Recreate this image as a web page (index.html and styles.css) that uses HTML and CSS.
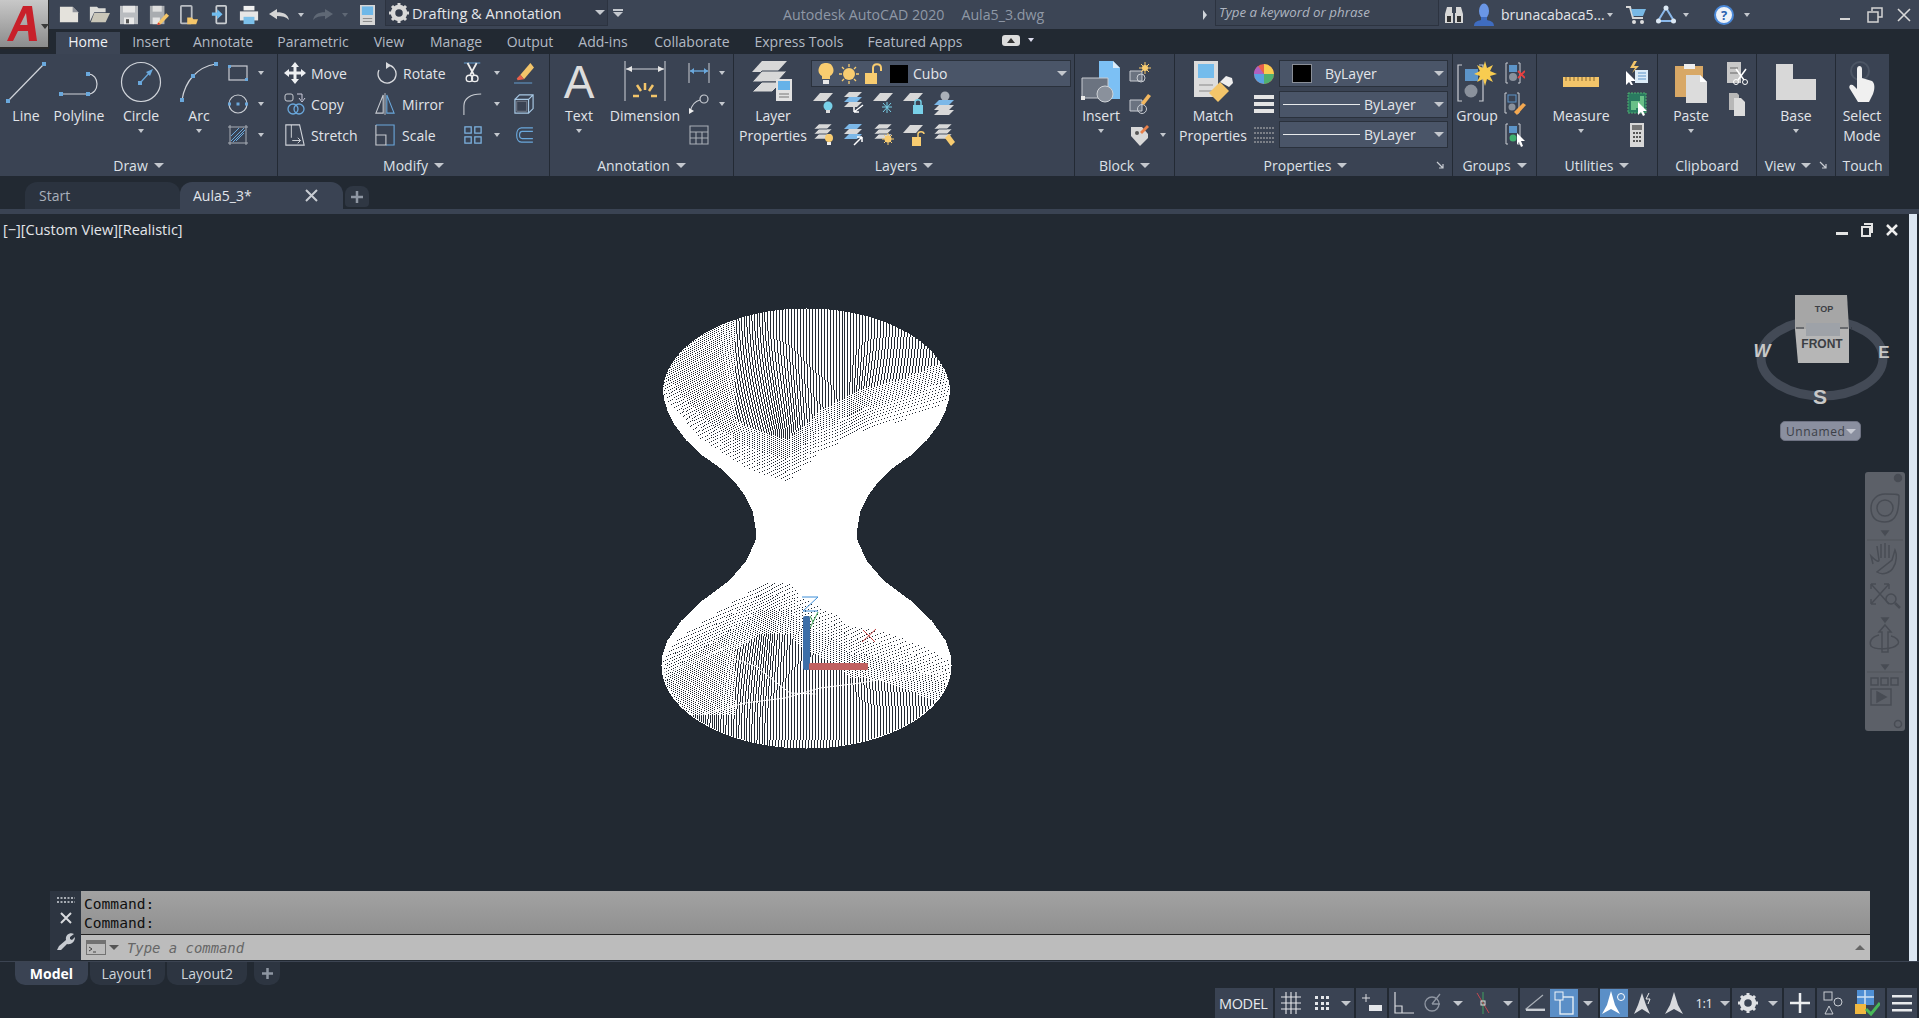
FILE: index.html
```html
<!DOCTYPE html>
<html lang="en">
<head>
<meta charset="utf-8">
<title>Autodesk AutoCAD 2020 Aula5_3.dwg</title>
<link rel="stylesheet" href="styles.css">
</head>
<body>
<div class="logo"><svg width="36" height="40" viewBox="0 0 36 40"><path d="M3 37 L19 2 H28 L33 37 H25 L24 27 H14 L9 37Z M16 21 H23.5 L22 9Z" fill="#c8202a" fill-rule="evenodd"/></svg><i class="car dark"></i></div>

<header class="titlebar">
  <span class="qa"><svg width="20" height="17" viewBox="0 0 22 22" preserveAspectRatio="none"><path d="M1 1H15L21 8V21H1Z" fill="#e4e2dc"/><path d="M15 1V8H21Z" fill="#8f939a"/></svg></span>
  <span class="qa"><svg width="21" height="17" viewBox="0 0 24 22" preserveAspectRatio="none"><path d="M1 1H9L11 3H19V8H6L1 20Z" fill="#dcdcd8"/><path d="M6 9H24L19 21H2Z" fill="#c9c6b8"/></svg></span>
  <span class="qa"><svg width="20" height="20" viewBox="0 0 20 24" preserveAspectRatio="none"><path d="M1 1H19V23H1Z" fill="#b9bcc0"/><path d="M4 1H16V9H4Z" fill="#e6e6e6"/><path d="M5 15H15V23H5Z" fill="#e9e9e9"/><path d="M7 17H10V22H7Z" fill="#555"/></svg></span>
  <span class="qa"><svg width="20" height="20" viewBox="0 0 22 24" preserveAspectRatio="none"><path d="M1 1H17V23H1Z" fill="#a9acb0"/><path d="M4 1H14V8H4Z" fill="#dedede"/><path d="M4 15H12V23H4Z" fill="#e3e3e3"/><path d="M10 21 L19 10 L22 13 L13 23 L9 24Z" fill="#f3c56a"/><path d="M9 24 L10 21 L13 23Z" fill="#d33"/></svg></span>
  <span class="qa"><svg width="18" height="20" viewBox="0 0 20 24" preserveAspectRatio="none"><rect x="1" y="1" width="12" height="21" rx="1" fill="none" stroke="#b8bcc2" stroke-width="2"/><path d="M8 15H13L15 17H20L18 23H8Z" fill="#f3c56a"/></svg></span>
  <span class="qa"><svg width="16" height="20" viewBox="0 0 18 24" preserveAspectRatio="none"><rect x="6" y="1" width="11" height="21" rx="1" fill="none" stroke="#c8ccd0" stroke-width="2"/><path d="M1 9H7V5L13 11L7 17V13H1Z" fill="#6fbdf0"/></svg></span>
  <span class="qa"><svg width="20" height="20" viewBox="0 0 22 22" preserveAspectRatio="none"><path d="M5 1H17V6H5Z" fill="#f0f0f0"/><path d="M1 7H21V17H1Z" fill="#e6e6e6"/><path d="M5 13H17V21H5Z" fill="#7cc0ea"/></svg></span>
  <span class="qa"><svg width="20" height="11" viewBox="0 0 20 14" preserveAspectRatio="none"><path d="M8 0V4C15 4 19 7 20 14C17 10 13 9 8 9V13L0 6.500Z" fill="#d4d4d4"/></svg></span>
  <span class="qs"><i class="car"></i></span>
  <span class="qa"><svg width="20" height="11" viewBox="0 0 20 14" preserveAspectRatio="none"><path d="M12 0V4C5 4 1 7 0 14C3 10 7 9 12 9V13L20 6.500Z" fill="#5f6875"/></svg></span>
  <span class="qs"><i class="car faint"></i></span>
  <span class="qa"><svg width="15" height="20" viewBox="0 0 16 28" preserveAspectRatio="none"><path d="M0 0H16V28H0Z" fill="#d7d7d7"/><path d="M2 2H14V14H2Z" fill="#6fb8e8"/><path d="M3 19H13M3 23H13" stroke="#777"/></svg></span>
  <div class="workspace"><svg class="gear" width="20" height="20" viewBox="0 0 20 20"><circle cx="10" cy="10" r="6" fill="none" stroke="#d8d8d8" stroke-width="4.500"/><path d="M10 0V4M10 16V20M0 10H4M16 10H20M3 3L6 6M14 14L17 17M17 3L14 6M3 17L6 14" stroke="#d8d8d8" stroke-width="3"/></svg><span class="wtext">Drafting &amp; Annotation</span><i class="car big"></i></div>
  <span class="wmenu"></span>
  <div class="apptitle"><span>Autodesk AutoCAD 2020</span><span>Aula5_3.dwg</span></div>
  <div class="titleright">
    <span class="play"></span>
    <div class="search">Type a keyword or phrase</div>
    <span class="tb binoc"><svg width="20" height="20" viewBox="0 0 20 20"><path d="M3 2H8V8H9V18H1V9Z M12 2H17L19 9V18H11V8H12Z" fill="#d7d7d7"/><path d="M3 11H7V17H3ZM13 11H17V17H13Z" fill="#333"/></svg></span>
    <span class="tb usr"><svg width="22" height="24" viewBox="0 0 22 24"><ellipse cx="11" cy="8" rx="5" ry="7.500" fill="#6a96e6"/><path d="M8 14H14V17C18 18 21 19 21 23H1C1 19 4 18 8 17Z" fill="#3f6cc0"/></svg></span>
    <span class="uname">brunacabaca5...</span>
    <span class="qs narrow"><i class="car"></i></span>
    <span class="tb cart"><svg width="22" height="20" viewBox="0 0 22 20"><path d="M1 2H5L8 13H18" fill="none" stroke="#d8d8d8" stroke-width="2"/><path d="M6 4H21L18 11H8Z" fill="#78b8e4"/><circle cx="9" cy="17" r="2" fill="#ddd"/><circle cx="17" cy="17" r="2" fill="#ddd"/></svg></span>
    <span class="tb a360"><svg width="20" height="20" viewBox="0 0 20 20"><path d="M10 3L2 16H18Z" fill="none" stroke="#8ab8ea" stroke-width="2"/><circle cx="10" cy="3" r="2.500" fill="#dce8f4"/><circle cx="2.500" cy="16" r="2.500" fill="#dce8f4"/><circle cx="17.500" cy="16" r="2.500" fill="#dce8f4"/></svg></span>
    <span class="qs"><i class="car"></i></span>
    <span class="tb helpb"><span class="helpi">?</span></span>
    <span class="qs"><i class="car"></i></span>
    <span class="win first"><svg width="12" height="12" viewBox="0 0 12 12"><path d="M1 9H11V11H1Z" fill="#d4d4d4"/></svg></span>
    <span class="win"><svg width="16" height="16" viewBox="0 0 16 16"><path d="M5 4V1H15V10H11M1 5H11V15H1Z" fill="none" stroke="#d4d4d4" stroke-width="1.500"/></svg></span>
    <span class="win last"><svg width="14" height="14" viewBox="0 0 14 14"><path d="M1 1L13 13M13 1L1 13" stroke="#d8d8d8" stroke-width="1.600"/></svg></span>
  </div>
</header>

<nav class="ribbontabs">
  <span class="rt active w64">Home</span><span class="rt w62">Insert</span><span class="rt w82">Annotate</span><span class="rt w98">Parametric</span><span class="rt w54">View</span><span class="rt w80">Manage</span><span class="rt w68">Output</span><span class="rt w78">Add-ins</span><span class="rt w100">Collaborate</span><span class="rt w114">Express Tools</span><span class="rt w118">Featured Apps</span>
  <span class="rtoggle"><svg width="18" height="11" viewBox="0 0 18 11"><rect width="18" height="11" rx="3" fill="#dcdcdc"/><path d="M5 8L9 3L13 8Z" fill="#333"/></svg></span><i class="car small"></i>
</nav>

<section class="ribbon">
  <div class="panel p278">
    <div class="pbody">
      <div class="lg w52"><div class="ic"><svg width="44" height="44" viewBox="0 0 44 44"><path d="M4 41L40 4" stroke="#d0d4da" stroke-width="1.200"/><rect x="2" y="39" width="4" height="4" fill="#6aa8dc"/><rect x="38" y="2" width="4" height="4" fill="#6aa8dc"/></svg></div><div class="lb">Line</div></div>
      <div class="lg w54"><div class="ic"><svg width="44" height="44" viewBox="0 0 44 44"><path d="M4 34H31C43 34 43 14 31 14" fill="none" stroke="#d0d4da" stroke-width="1.200"/><rect x="2" y="32" width="4" height="4" fill="#6aa8dc"/><rect x="29" y="32" width="4" height="4" fill="#6aa8dc"/><rect x="29" y="12" width="4" height="4" fill="#6aa8dc"/></svg></div><div class="lb">Polyline</div></div>
      <div class="lg w70"><div class="ic"><svg width="42" height="42" viewBox="0 0 42 42"><circle cx="21" cy="21" r="19.500" fill="none" stroke="#d0d4da" stroke-width="1.200"/><path d="M20 22L31 10" stroke="#6aa8dc" stroke-width="1.200"/><path d="M33 8L26 11L30 15Z" fill="#6aa8dc"/><rect x="18" y="20" width="4" height="4" fill="#6aa8dc"/></svg></div><div class="lb">Circle</div><i class="car"></i></div>
      <div class="lg w46"><div class="ic"><svg width="42" height="42" viewBox="0 0 42 42"><path d="M4 39C7 20 19 6 38 3" fill="none" stroke="#d0d4da" stroke-width="1.200"/><rect x="2" y="37" width="4" height="4" fill="#6aa8dc"/><rect x="13" y="13" width="4" height="4" fill="#6aa8dc"/><rect x="36" y="1" width="4" height="4" fill="#6aa8dc"/></svg></div><div class="lb">Arc</div><i class="car"></i></div>
      <div class="st">
        <div class="rw"><span class="cell w32"><svg width="22" height="18" viewBox="0 0 22 18"><rect x="2" y="2" width="18" height="14" fill="none" stroke="#c8ccd2" stroke-width="1.200"/><rect x="1" y="1" width="3" height="3" fill="#6aa8dc"/><rect x="18" y="14" width="3" height="3" fill="#6aa8dc"/></svg></span><span class="cell w14"><i class="car"></i></span></div>
        <div class="rw"><span class="cell w32"><svg width="22" height="20" viewBox="0 0 22 20"><circle cx="11" cy="10" r="9" fill="none" stroke="#c8ccd2" stroke-width="1.200"/><rect x="1" y="8.500" width="3" height="3" fill="#6aa8dc"/><rect x="9.500" y="8.500" width="3" height="3" fill="#6aa8dc"/><rect x="18" y="8.500" width="3" height="3" fill="#6aa8dc"/></svg></span><span class="cell w14"><i class="car"></i></span></div>
        <div class="rw"><span class="cell w32"><svg width="20" height="20" viewBox="0 0 20 20"><path d="M2 0V20M18 0V20M0 2H20M0 18H20" stroke="#a8aeb6"/><path d="M3 16L16 3M3 11L11 3M8 16L16 8M5 17L17 5" stroke="#6aa8dc"/></svg></span><span class="cell w14"><i class="car"></i></span></div>
      </div>
    </div>
    <div class="pfoot"><span class="ft">Draw</span><i class="car big"></i></div>
  </div>

  <div class="panel p272">
    <div class="st">
      <div class="rw">
        <span class="mi w97"><svg width="22" height="22" viewBox="0 0 22 22"><path d="M11 0L15 5H12.500V9.500H17V7L22 11L17 15V12.500H12.500V17H15L11 22L7 17H9.500V12.500H5V15L0 11L5 7V9.500H9.500V5H7Z" fill="#eef0f2"/></svg><span class="ml">Move</span></span>
        <span class="mi w87"><svg width="22" height="22" viewBox="0 0 22 22"><path d="M12 3A9 9 0 1 1 4 8" fill="none" stroke="#d8dade" stroke-width="1.300"/><path d="M11 0L16 3.500L11 7Z" fill="#d8dade"/></svg><span class="ml s1">Rotate</span></span>
        <span class="cell w22"><svg width="20" height="24" viewBox="0 0 22 24"><path d="M1 1H19" stroke="#6aa8dc"/><path d="M5 1L12 14M15 1L8 14" stroke="#eee" stroke-width="2"/><circle cx="7" cy="18" r="3.500" fill="none" stroke="#eee" stroke-width="1.500"/><circle cx="13" cy="18" r="3.500" fill="none" stroke="#eee" stroke-width="1.500"/></svg></span><span class="cell w14 gapl"><i class="car"></i></span>
        <span class="cell w22 gapr"><svg width="20" height="24" viewBox="0 0 22 24"><path d="M7 14L18 1L22 6L11 19Z" fill="#f3c56a"/><path d="M3 18L7 14L11 19L4 20Z" fill="#e8604a"/><path d="M0 23H20" stroke="#6aa8dc"/></svg></span>
      </div>
      <div class="rw">
        <span class="mi w97"><svg width="22" height="22" viewBox="0 0 22 22"><rect x="1" y="1" width="8" height="7" rx="2" fill="none" stroke="#c8ccd2"/><path d="M13 1H18V7M15 5L18 9L21 5" fill="none" stroke="#ccd"/><circle cx="9" cy="16" r="5" fill="none" stroke="#6aa8dc" stroke-width="1.300"/><circle cx="15" cy="16" r="5" fill="none" stroke="#6aa8dc" stroke-width="1.300"/></svg><span class="ml">Copy</span></span>
        <span class="mi w87"><svg width="20" height="22" viewBox="0 0 22 24"><path d="M9 2L1 22H9Z" fill="none" stroke="#c8ccd2" stroke-width="1.200"/><path d="M13 2L21 22H13Z" fill="none" stroke="#6aa8dc" stroke-width="1.200"/><path d="M11 0V24" stroke="#c8ccd2"/></svg><span class="ml s0">Mirror</span></span>
        <span class="cell w22"><svg width="20" height="24" viewBox="0 0 22 24"><path d="M1 24V14C1 6 8 1 20 1" fill="none" stroke="#c8ccd2" stroke-width="1.200"/></svg></span><span class="cell w14 gapl"><i class="car"></i></span>
        <span class="cell w22 gapr"><svg width="20" height="20" viewBox="0 0 22 22"><path d="M1 6H16V21H1ZM1 6L6 1H21V16L16 21M16 6L21 1" fill="none" stroke="#a7c8e4" stroke-width="1.300"/><path d="M3 8H14V19H3Z" fill="none" stroke="#777f8c"/></svg></span>
      </div>
      <div class="rw">
        <span class="mi w97"><svg width="22" height="22" viewBox="0 0 22 24"><path d="M1 1H16L21 23H1Z" fill="none" stroke="#d0d4da" stroke-width="1.200"/><path d="M7 1V15M8 18H17M14 15L17 18L14 21" fill="none" stroke="#d8dade"/></svg><span class="ml">Stretch</span></span>
        <span class="mi w87"><svg width="20" height="22" viewBox="0 0 22 24"><path d="M1 1H21V23H12" fill="none" stroke="#6aa8dc" stroke-width="1.200"/><path d="M1 1V12M1 12H12V23H1Z" fill="none" stroke="#c8ccd2" stroke-width="1.200"/></svg><span class="ml s0">Scale</span></span>
        <span class="cell w22"><svg width="18" height="20" viewBox="0 0 20 20"><path d="M1 1H8V8H1ZM12 1H19V8H12ZM1 12H8V19H1ZM12 12H19V19H12Z" fill="none" stroke="#7eb4e2" stroke-width="1.400"/></svg></span><span class="cell w14 gapl"><i class="car"></i></span>
        <span class="cell w22 gapr"><svg width="20" height="16" viewBox="0 0 22 18"><path d="M21 1H8C1 1 1 17 8 17H21M21 5H9C5 5 5 13 9 13H21" fill="none" stroke="#6aa8dc" stroke-width="1.300"/></svg></span>
      </div>
    </div>
    <div class="pfoot fabs"><span class="ft">Modify</span><i class="car big"></i></div>
  </div>

  <div class="panel p184">
    <div class="pbody">
      <div class="lg w58"><div class="ic"><span class="bigA">A</span></div><div class="lb">Text</div><i class="car"></i></div>
      <div class="lg w74"><div class="ic"><svg width="42" height="42" viewBox="0 0 42 42"><path d="M1 0V40M41 0V40" stroke="#d0d4da"/><path d="M2 8H40" stroke="#d0d4da"/><path d="M2 8L8 5V11ZM40 8L34 5V11Z" fill="#e6e6e6"/><path d="M21 22V29M13 24L17 30M29 24L25 30M9 35H15M27 35H33" stroke="#f3c56a" stroke-width="2.500"/></svg></div><div class="lb">Dimension</div></div>
      <div class="st">
        <div class="rw"><span class="cell w34"><svg width="22" height="20" viewBox="0 0 22 20"><path d="M1 0V20M21 0V20" stroke="#c8ccd2"/><path d="M2 8H20" stroke="#6aa8dc" stroke-width="1.400"/><path d="M2 8L6 5V11ZM20 8L16 5V11Z" fill="#6aa8dc"/></svg></span><span class="cell w12"><i class="car"></i></span></div>
        <div class="rw"><span class="cell w34"><svg width="22" height="20" viewBox="0 0 22 20"><circle cx="16" cy="5" r="4" fill="none" stroke="#c8ccd2" stroke-width="1.200"/><path d="M12 6C7 7 4 11 2 17" fill="none" stroke="#c8ccd2" stroke-width="1.200"/><path d="M1 20L1 14L6 17Z" fill="#eee"/></svg></span><span class="cell w12"><i class="car"></i></span></div>
        <div class="rw"><span class="cell w34"><svg width="20" height="20" viewBox="0 0 20 20"><path d="M1 1H19V19H1ZM1 7H19M1 13H19M7 7V19M13 7V19" fill="none" stroke="#a8aeb6" stroke-width="1.100"/></svg></span></div>
      </div>
    </div>
    <div class="pfoot"><span class="ft">Annotation</span><i class="car big"></i></div>
  </div>

  <div class="panel p341">
    <div class="pbody">
      <div class="lg w78 tw"><div class="ic"><svg width="42" height="42" viewBox="0 0 42 42"><path d="M10 0H35L25 11H0Z" fill="#d8d8d8"/><path d="M10 10H35L25 21H0Z" fill="#d8d8d8" stroke="#3a4454"/><path d="M10 21H30L20 31H0Z" fill="#d8d8d8" stroke="#3a4454"/><path d="M24 18H40V40H24Z" fill="#e2e2e2"/><path d="M26 20H38V29H26Z" fill="#66b2e8"/><path d="M27 33H37M27 36H37" stroke="#777"/></svg></div><div class="lb">Layer</div><div class="lb">Properties</div></div>
      <div class="lcol">
        <div class="combo layer">
          <svg width="16" height="22" viewBox="0 0 16 22"><path d="M8 0A7 7 0 0 1 12 13V16H4V13A7 7 0 0 1 8 0Z" fill="#f8cc70"/><path d="M5 17H11V21H5Z" fill="#e8e8e8"/></svg>
          <svg width="20" height="20" viewBox="0 0 20 20"><circle cx="10" cy="10" r="6" fill="#f8cc70"/><path d="M10 0V3M10 17V20M0 10H3M17 10H20M3 3L5 5M15 15L17 17M17 3L15 5M3 17L5 15" stroke="#f8cc70" stroke-width="1.300"/></svg>
          <svg width="18" height="22" viewBox="0 0 18 22"><path d="M1 10H13V21H1Z" fill="#f8cc70"/><path d="M9 10V5C9 0 17 0 17 5V8" fill="none" stroke="#f8cc70" stroke-width="2"/></svg>
          <span class="swatch"></span><span class="ctext">Cubo</span><i class="car big end"></i>
        </div>
        <div class="lrow">
          <span class="cell w30"><svg width="22" height="22" viewBox="0 0 22 22"><path d="M7 1H20L13 9H0Z" fill="#d8d8d8"/><circle cx="15" cy="14" r="4.500" fill="#78d0e8"/><path d="M13 18H17V21H13Z" fill="#ddd"/></svg></span>
          <span class="cell w30"><svg width="22" height="22" viewBox="0 0 22 22"><path d="M6 0H19L14 5H1Z" fill="#d8d8d8"/><path d="M6 5H19L14 10H1Z" fill="#7cb8e8"/><path d="M6 10H19L14 15H1Z" fill="#d8d8d8"/><path d="M11 20L20 13M11 20V15M11 20H16" stroke="#fff" stroke-width="1.500"/></svg></span>
          <span class="cell w30"><svg width="22" height="22" viewBox="0 0 22 22"><path d="M7 1H20L13 9H0Z" fill="#d8d8d8"/><path d="M14 10V21M9 15H19M10 11L18 20M18 11L10 20" stroke="#78d0e8"/></svg></span>
          <span class="cell w30"><svg width="22" height="22" viewBox="0 0 22 22"><path d="M7 1H20L13 9H0Z" fill="#d8d8d8"/><path d="M10 13H20V22H10Z" fill="#78d0e8"/><path d="M12 13V10C12 7 18 7 18 10V13" fill="none" stroke="#78d0e8" stroke-width="1.500"/></svg></span>
          <span class="cell w30"><svg width="22" height="24" viewBox="0 0 22 24"><circle cx="12" cy="5" r="4.500" fill="#aab0b8"/><path d="M6 9H21L16 14H1Z" fill="#7cb8e8"/><path d="M6 14H21L16 19H1Z" fill="#d8d8d8"/><path d="M6 19H21L16 24H1Z" fill="#d8d8d8"/></svg></span>
        </div>
        <div class="lrow">
          <span class="cell w30"><svg width="22" height="22" viewBox="0 0 22 22"><path d="M6 0H19L14 5H1Z M6 5H19L14 10H1Z M6 10H19L14 15H1Z" fill="#d8d8d8" stroke="#3a4454" stroke-width=".5"/><circle cx="16" cy="14" r="4" fill="#f8cc70"/><path d="M14 18H18V21H14Z" fill="#eee"/></svg></span>
          <span class="cell w30"><svg width="22" height="22" viewBox="0 0 22 22"><path d="M6 0H19L14 5H1Z" fill="#7cb8e8"/><path d="M6 5H19L14 10H1Z" fill="#d8d8d8"/><path d="M6 10H19L14 15H1Z" fill="#7cb8e8"/><path d="M11 21L19 13M19 13V18M19 13H14" stroke="#fff" stroke-width="1.500"/></svg></span>
          <span class="cell w30"><svg width="22" height="22" viewBox="0 0 22 22"><path d="M6 0H19L14 5H1Z M6 5H19L14 10H1Z M6 10H19L14 15H1Z" fill="#d8d8d8" stroke="#3a4454" stroke-width=".5"/><circle cx="15" cy="15" r="3.500" fill="#f8cc70"/><path d="M15 9V21M9 15H21M11 11L19 19M19 11L11 19" stroke="#f8cc70"/></svg></span>
          <span class="cell w30"><svg width="22" height="22" viewBox="0 0 22 22"><path d="M7 1H20L13 9H0Z" fill="#d8d8d8"/><path d="M9 13H18V22H9Z" fill="#f8cc70"/><path d="M15 13V10C15 7 21 7 21 10" fill="none" stroke="#f8cc70" stroke-width="1.500"/></svg></span>
          <span class="cell w30"><svg width="22" height="22" viewBox="0 0 22 22"><path d="M6 0H19L14 5H1Z M6 5H19L14 10H1Z M6 10H19L14 15H1Z" fill="#d8d8d8" stroke="#3a4454" stroke-width=".5"/><path d="M12 14L16 10L22 18L18 22Z" fill="#f8cc70"/></svg></span>
        </div>
      </div>
    </div>
    <div class="pfoot"><span class="ft">Layers</span><i class="car big"></i></div>
  </div>

  <div class="panel p100">
    <div class="pbody">
      <div class="lg w52"><div class="ic"><svg width="40" height="42" viewBox="0 0 40 42"><path d="M18 0H32L39 7V38H18Z" fill="#7cc0f4"/><path d="M32 0V7H39Z" fill="#dcecf8"/><path d="M1 17H27V37H1Z" fill="#6b7380" stroke="#c8ccd2"/><circle cx="24" cy="33" r="8" fill="#8a919c" stroke="#d0d4d8"/><rect y="35" width="4" height="4" fill="#e8e8e8"/></svg></div><div class="lb">Insert</div><i class="car"></i></div>
      <div class="st">
        <div class="rw"><span class="cell w26"><svg width="22" height="22" viewBox="0 0 22 22"><path d="M1 9H13V19H1Z" fill="#6b7380" stroke="#c8ccd2"/><circle cx="12" cy="16" r="4" fill="none" stroke="#c8ccd2"/><circle cx="16" cy="6" r="3" fill="#f8cc70"/><path d="M16 0V12M10 6H22M12 2L20 10M20 2L12 10" stroke="#f8cc70"/></svg></span></div>
        <div class="rw"><span class="cell w26"><svg width="22" height="22" viewBox="0 0 22 22"><path d="M1 7H13V18H1Z" fill="#6b7380" stroke="#c8ccd2"/><circle cx="13" cy="16" r="4.500" fill="none" stroke="#c8ccd2"/><path d="M12 10L19 1L22 3L15 12Z" fill="#f3b860"/></svg></span></div>
        <div class="rw"><span class="cell w26"><svg width="20" height="22" viewBox="0 0 20 22"><path d="M1 3H12L18 10V14L10 22L1 12Z" fill="#d8d8d8"/><path d="M10 8L17 1L19 3L12 10Z" fill="#e8804a"/><circle cx="7" cy="9" r="2" fill="#555"/></svg></span><span class="cell w20"><i class="car"></i></span></div>
      </div>
    </div>
    <div class="pfoot"><span class="ft">Block</span><i class="car big"></i></div>
  </div>

  <div class="panel p278">
    <div class="pbody">
      <div class="lg w76 tw"><div class="ic"><svg width="40" height="42" viewBox="0 0 40 42"><path d="M1 0H25V36H1Z" fill="#dcdcdc"/><path d="M5 3H21V17H5Z" fill="#74bcec"/><path d="M6 24H20M6 30H20" stroke="#888"/><path d="M16 32L27 21L36 30L25 41Z" fill="#f3c56a"/><path d="M27 21L33 15L39 17L40 22L36 26Z" fill="#eee"/></svg></div><div class="lb">Match</div><div class="lb">Properties</div></div>
      <div class="pcol">
        <div class="prow"><span class="pic"><svg width="20" height="24" viewBox="0 0 20 24"><circle cx="10" cy="12" r="10" fill="#e8604a"/><path d="M10 12V2A10 10 0 0 1 20 12Z" fill="#f8cc50"/><path d="M10 12H20A10 10 0 0 1 10 22Z" fill="#50b070"/><path d="M10 12V22A10 10 0 0 1 0 12Z" fill="#5aa0e0"/><path d="M10 12H0A10 10 0 0 1 4 4Z" fill="#b060c0"/></svg></span>
          <div class="combo prop"><span class="swatch sq"></span><span class="ctext m1">ByLayer</span><i class="car big end"></i></div></div>
        <div class="prow"><span class="pic"><svg width="20" height="20" viewBox="0 0 20 20"><path d="M0 1H20V5H0ZM0 8H20V12H0ZM0 15H20V19H0Z" fill="#e4e4e4"/></svg></span>
          <div class="combo prop"><span class="pline"></span><span class="ctext">ByLayer</span><i class="car big end"></i></div></div>
        <div class="prow"><span class="pic"><svg width="20" height="18" viewBox="0 0 20 18"><path d="M0 2H20M0 7H20M0 12H20M0 16H20" stroke="#bbb" stroke-dasharray="2 1"/></svg></span>
          <div class="combo prop"><span class="pline"></span><span class="ctext">ByLayer</span><i class="car big end"></i></div></div>
      </div>
    </div>
    <div class="pfoot"><div class="ftw"><span class="ft">Properties</span><i class="car big"></i></div><span class="launch"><svg width="8" height="8" viewBox="0 0 8 8"><path d="M1 1L7 7M7 3V7H3" fill="none" stroke="#c8ccd2" stroke-width="1.200"/></svg></span></div>
  </div>

  <div class="panel p84">
    <div class="pbody">
      <div class="lg w48"><div class="ic"><svg width="40" height="42" viewBox="0 0 40 42"><path d="M5 4H1V40H5M22 4H26V40H22" fill="none" stroke="#c8ccd2" stroke-width="1.200"/><rect x="8" y="8" width="13" height="12" fill="#5c94c8"/><circle cx="14" cy="30" r="6.500" fill="#8a919c"/><path d="M28 0L30 7L36 4L33 10L40 13L33 15L36 21L30 18L28 25L26 18L20 21L23 15L17 13L23 10L20 4L26 7Z" fill="#f8cc50"/></svg></div><div class="lb">Group</div></div>
      <div class="st">
        <div class="rw"><span class="cell w28"><svg width="20" height="22" viewBox="0 0 20 22"><path d="M3 1H1V21H3M13 1H15V21H13" fill="none" stroke="#c8ccd2"/><rect x="4" y="3" width="8" height="7" fill="#5c94c8"/><circle cx="8" cy="15" r="4" fill="#8a919c"/><path d="M13 9L20 16M20 9L13 16" stroke="#e84040" stroke-width="1.800"/></svg></span></div>
        <div class="rw"><span class="cell w28"><svg width="22" height="24" viewBox="0 0 22 24"><path d="M3 1H1V21H3M13 1H15V21H13" fill="none" stroke="#c8ccd2"/><rect x="4" y="3" width="8" height="7" fill="none" stroke="#5c94c8"/><circle cx="8" cy="15" r="3.500" fill="#8a919c"/><path d="M10 20L19 11L22 13L13 23Z" fill="#f3a850"/></svg></span></div>
        <div class="rw"><span class="cell w28"><svg width="20" height="24" viewBox="0 0 20 24"><path d="M3 1H1V21H3M13 1H15V21H13" fill="none" stroke="#c8ccd2"/><rect x="4" y="3" width="8" height="7" fill="#5c94c8"/><circle cx="8" cy="15" r="3.500" fill="#40b070"/><path d="M12 10L20 18H16L18 23L16 24L14 19L12 22Z" fill="#fff"/></svg></span></div>
      </div>
    </div>
    <div class="pfoot"><span class="ft">Groups</span><i class="car big"></i></div>
  </div>

  <div class="panel p121">
    <div class="pbody">
      <div class="lg w88"><div class="ic"><svg width="36" height="10" viewBox="0 0 36 10"><rect width="36" height="10" fill="#f3c56a"/><path d="M3 0V4M7 0V4M11 0V4M15 0V4M19 0V4M23 0V4M27 0V4M31 0V4" stroke="#8a6a30"/></svg></div><div class="lb">Measure</div><i class="car"></i></div>
      <div class="st">
        <div class="rw"><span class="cell w24"><svg width="22" height="24" viewBox="0 0 22 24"><path d="M8 0L4 7H9L6 12L13 5H8L11 0Z" fill="#f3c56a"/><path d="M0 10L10 20H5L7 24L5 24L3 21L0 24Z" fill="#fff"/><path d="M9 9H22V22H9Z" fill="#dcecf8"/><path d="M12 12H20M12 15H20M12 18H20" stroke="#5c94c8"/></svg></span></div>
        <div class="rw"><span class="cell w24"><svg width="20" height="24" viewBox="0 0 20 24"><rect x="1" y="1" width="18" height="20" fill="#2a7a60" stroke="#50b070" stroke-dasharray="2 1"/><path d="M4 9H13V4H17V16H9V18H4Z" fill="#6ac088"/><path d="M11 10L20 19H16L18 23L16 24L14 20L11 23Z" fill="#fff"/></svg></span></div>
        <div class="rw"><span class="cell w24"><svg width="14" height="24" viewBox="0 0 14 24"><rect width="14" height="24" fill="#d8d8d8"/><rect x="2" y="2" width="10" height="5" fill="#777"/><path d="M3 10H5M6 10H8M9 10H11M3 14H5M6 14H8M9 14H11M3 18H5M6 18H8M9 18H11" stroke="#555" stroke-width="2"/></svg></span></div>
      </div>
    </div>
    <div class="pfoot"><span class="ft">Utilities</span><i class="car big"></i></div>
  </div>

  <div class="panel p99">
    <div class="pbody">
      <div class="lg w66"><div class="ic"><svg width="34" height="42" viewBox="0 0 34 42"><path d="M1 5H29V36H1Z" fill="#d8a866"/><path d="M10 3H21V8H10Z" fill="#eee"/><path d="M12 14H26L33 21V42H12Z" fill="#dcdcdc"/><path d="M26 14V21H33Z" fill="#fff"/></svg></div><div class="lb">Paste</div><i class="car"></i></div>
      <div class="st">
        <div class="rw"><span class="cell w26"><svg width="22" height="24" viewBox="0 0 22 24"><path d="M1 1H15V22H1Z" fill="#c8c8c8"/><path d="M4 7H12M4 12H12" stroke="#666"/><path d="M10 8L18 19M20 8L12 19" stroke="#fff" stroke-width="1.500"/><circle cx="10" cy="21" r="2.500" fill="none" stroke="#fff"/><circle cx="19" cy="21" r="2.500" fill="none" stroke="#fff"/></svg></span></div>
        <div class="rw"><span class="cell w26"><svg width="18" height="24" viewBox="0 0 18 24"><path d="M1 1H9L11 3V18H1Z" fill="#b8b8b8"/><path d="M6 6H13L17 10V24H6Z" fill="#dcdcdc"/></svg></span></div>
      </div>
    </div>
    <div class="pfoot"><span class="ft">Clipboard</span></div>
  </div>

  <div class="panel p79">
    <div class="pbody">
      <div class="lg w78"><div class="ic"><svg width="40" height="36" viewBox="0 0 40 36"><path d="M0 0H17V15H40V36H0Z" fill="#d8d8d8"/></svg></div><div class="lb">Base</div><i class="car"></i></div>
    </div>
    <div class="pfoot"><div class="ftw"><span class="ft">View</span><i class="car big"></i></div><span class="launch"><svg width="8" height="8" viewBox="0 0 8 8"><path d="M1 1L7 7M7 3V7H3" fill="none" stroke="#c8ccd2" stroke-width="1.200"/></svg></span></div>
  </div>

  <div class="panel p53 noborder">
    <div class="pbody">
      <div class="lg w52 tw"><div class="ic"><svg width="28" height="42" viewBox="0 0 28 42"><circle cx="12" cy="10" r="9" fill="none" stroke="#4c5564" stroke-width="2"/><path d="M9 8C9 4 14 4 14 8V17L24 20C27 22 27 28 25 33L21 41H10L2 28C0 25 3 22 6 25L9 28Z" fill="#f0f0f0"/></svg></div><div class="lb">Select</div><div class="lb">Mode</div></div>
    </div>
    <div class="pfoot"><span class="ft">Touch</span></div>
  </div>
</section>

<nav class="doctabs">
  <span class="dt start">Start</span>
  <span class="dt current"><span>Aula5_3*</span><svg width="13" height="13" viewBox="0 0 13 13"><path d="M1 1L12 12M12 1L1 12" stroke="#c8ccd2" stroke-width="2"/></svg></span>
  <span class="dt plus"><svg width="12" height="12" viewBox="0 0 12 12"><path d="M6 0V12M0 6H12" stroke="#8e96a2" stroke-width="2.500"/></svg></span>
</nav>
<div class="strip"></div>

<main class="viewport">
  <div class="vplabel">[&#8722;][Custom View][Realistic]</div>
  <div class="vpctrl">
    <svg width="12" height="12" viewBox="0 0 12 12"><path d="M0 8H12V11H0Z" fill="#e4e4e4"/></svg>
    <svg width="12" height="14" viewBox="0 0 12 14"><path d="M3 1H11V10M1 4H9V13H1Z" fill="none" stroke="#e4e4e4" stroke-width="2"/></svg>
    <svg width="12" height="12" viewBox="0 0 12 12"><path d="M1 1L11 11M11 1L1 11" stroke="#eee" stroke-width="2.500"/></svg>
  </div>
  <canvas id="mesh" class="mesh" width="340" height="480"></canvas>
  <svg class="ucs" width="100" height="100" viewBox="0 0 100 100">
    <path d="M21 1H37L22 15H37" fill="none" stroke="#3c8ed8" stroke-width="1"/>
    <path d="M29 20L32 26M37 16L29 32" fill="none" stroke="#3aa050" stroke-width="1"/>
    <path d="M81 46L95 33M82 34L94 46" fill="none" stroke="#c04040" stroke-width="1"/>
    <rect x="22" y="20" width="7" height="54" rx="2" fill="#3d6fa8"/>
    <rect x="28" y="67" width="59" height="7" rx="1.500" fill="#c06060"/>
  </svg>
  <svg class="cube" width="170" height="130" viewBox="0 0 170 130">
    <ellipse cx="85" cy="73" rx="61" ry="38" fill="none" stroke="#434a56" stroke-width="9"/>
    <path d="M58 10H110L112 44H58Z" fill="#a6a6a6"/>
    <path d="M58 44L112 44V78H61Z" fill="#b6b6b6"/>
    <path d="M59 43H115" stroke="#2a2f36" stroke-dasharray="8 3"/>
    <rect x="69" y="38" width="34" height="13" fill="#9ea2a8"/>
    <text x="87" y="27" class="ct ct-top" text-anchor="middle">TOP</text>
    <text x="85" y="63" class="ct ct-front" text-anchor="middle">FRONT</text>
    <text x="25" y="72" class="ct ct-dir ct-w" text-anchor="middle">W</text>
    <text x="147" y="73" class="ct ct-dir ct-e" text-anchor="middle">E</text>
    <text x="83" y="119" class="ct ct-s" text-anchor="middle">S</text>
  </svg>
  <div class="unnamed"><span>Unnamed</span><i class="car pale"></i></div>
  <div class="navbar">
    <svg width="40" height="259" viewBox="0 0 40 259" fill="none" stroke="#484c54" stroke-width="1.500">
      <circle cx="33" cy="6" r="3.500" fill="#484c54"/><circle cx="33" cy="252" r="3.500"/>
      <path d="M20 22C30 22 34 22 34 24C34 38 32 50 20 50C8 50 6 42 6 36C6 28 12 22 20 22Z"/><circle cx="20" cy="36" r="8"/>
      <path d="M17 59H23L20 63Z" fill="#484c54"/><path d="M2 68H38" stroke="#54585f"/>
      <path d="M8 92L6 84C12 90 14 90 14 88L12 74M16 86V72M20 86V71M24 86V73M27 88L30 78C32 82 32 90 28 96C26 100 18 104 12 100Z"/>
      <path d="M6 112L24 132M24 112L6 132M6 112H11M6 112V117M24 112H19M24 112V117M6 132H11M6 132V127"/><circle cx="26" cy="127" r="5"/><path d="M30 131L35 136" stroke-width="2.500"/>
      <path d="M17 146H23L20 150Z" fill="#484c54"/>
      <path d="M20 153L26 160H23V180H17V160H14Z"/><path d="M14 163C6 165 4 170 6 174C10 178 28 178 33 172C35 168 30 165 26 164"/>
      <path d="M17 193H23L20 197Z" fill="#484c54"/><path d="M2 200H38" stroke="#54585f"/>
      <path d="M6 206H13V213H6ZM16 206H23V213H16ZM26 206H33V213H26ZM6 217H26V233H6Z"/><path d="M12 220L21 225L12 230Z" fill="#484c54"/>
    </svg>
  </div>
  <div class="scrollbar"></div>
  <div class="cmd">
    <div class="cmdhandle">
      <svg width="18" height="6" viewBox="0 0 18 6"><path d="M0 1H18M0 5H18" stroke="#d0d4da" stroke-width="1.500" stroke-dasharray="2 1.500"/></svg>
      <svg width="12" height="12" viewBox="0 0 12 12"><path d="M1 1L11 11M11 1L1 11" stroke="#d8dade" stroke-width="2"/></svg>
      <svg width="19" height="19" viewBox="0 0 19 19"><path d="M1 18L3 14L10 8C9 3 14 0 18 2L14 5V7L16 8L19 5C19 10 15 13 11 12L5 18Z" fill="#c8ccd2"/></svg>
    </div>
    <div class="cmdmain">
      <div class="cmdhist"><div>Command:</div><div>Command:</div></div>
      <div class="cmdinput">
        <svg width="20" height="15" viewBox="0 0 20 15"><path d="M0 0H20V15H0Z" fill="#727272"/><path d="M1 4H19V14H1Z" fill="#bcbcbc"/><path d="M3 7L6 9L3 11M7 12H10" fill="none" stroke="#444"/></svg>
        <i class="car big gr"></i>
        <span class="cmdph">Type a command</span>
        <i class="car big up"></i>
      </div>
    </div>
  </div>
</main>

<nav class="layouttabs">
  <span class="lt model">Model</span><span class="lt w75">Layout1</span><span class="lt w80t">Layout2</span><span class="lt ltplus"><svg width="11" height="11" viewBox="0 0 11 11"><path d="M5.500 0V11M0 5.500H11" stroke="#8e96a2" stroke-width="2.500"/></svg></span>
</nav>

<footer class="status">
  <div class="sg sw58"><span class="mtext">MODEL</span></div>
  <div class="sg sw79">
    <span class="si w31"><svg width="20" height="22" viewBox="0 0 20 22"><path d="M5 0V22M10 0V22M15 0V22M0 5H20M0 11H20M0 17H20" stroke="#e4e6ea" stroke-width="1.100"/></svg></span>
    <span class="si w31"><svg width="16" height="16" viewBox="0 0 16 16"><path d="M1 1H4V4H1ZM7 1H10V4H7ZM12 1H15V4H12ZM1 7H4V10H1ZM7 7H10V10H7ZM12 7H15V10H12ZM1 12H4V15H1ZM7 12H10V15H7ZM12 12H15V15H12Z" fill="#e4e6ea"/></svg></span>
    <span class="si w17"><i class="car big"></i></span>
  </div>
  <div class="sg sw31"><span class="si w31"><svg width="22" height="20" viewBox="0 0 22 20"><path d="M1 5H9M5 1V9" stroke="#d8dade"/><path d="M8 12H21V18H8Z" fill="#e4e6ea"/></svg></span></div>
  <div class="sg sw129">
    <span class="si w30"><svg width="20" height="22" viewBox="0 0 20 22"><path d="M1 0V21H20M1 14H8V21" fill="none" stroke="#d8dade" stroke-width="1.200"/></svg></span>
    <span class="si w28"><svg width="18" height="20" viewBox="0 0 18 20"><circle cx="8" cy="11" r="7" fill="none" stroke="#8f96a2" stroke-width="1.300"/><path d="M8 11L16 1M8 11H16" stroke="#8f96a2" stroke-width="1.300"/></svg></span>
    <span class="si w22"><i class="car big"></i></span>
    <span class="si w28"><svg width="14" height="22" viewBox="0 0 14 22"><path d="M7 0V22" stroke="#40a060"/><path d="M1 1L13 21" stroke="#c04850"/><rect x="5" y="9" width="4" height="4" fill="none" stroke="#ddd"/></svg></span>
    <span class="si w21"><i class="car big"></i></span>
  </div>
  <div class="sg sw78">
    <span class="si w30"><svg width="20" height="18" viewBox="0 0 20 18"><path d="M18 1L1 15H20" fill="none" stroke="#a8aeb6" stroke-width="1.200"/><path d="M1 16H20" stroke="#c8ccd2" stroke-width="2"/></svg></span>
    <span class="si w28 on"><svg width="20" height="24" viewBox="0 0 20 24"><rect x="6" y="6" width="13" height="17" fill="none" stroke="#f0f4f8" stroke-width="1.300"/><rect x="1" y="1" width="8" height="8" fill="#5b8fc7" stroke="#f0f4f8"/></svg></span>
    <span class="si w20"><i class="car big"></i></span>
  </div>
  <div class="sg sw130">
    <span class="si w28 on"><svg width="24" height="24" viewBox="0 0 24 24"><path d="M9 0L13 14L18 23L9 18L0 23L5 14Z" fill="#fff"/><circle cx="19" cy="6" r="3.500" fill="none" stroke="#fff"/></svg></span>
    <span class="si w31"><svg width="20" height="24" viewBox="0 0 20 24"><path d="M8 2L12 14L16 23L8 18L0 23L4 14Z" fill="#d8dade"/><path d="M15 2L12 8H16L14 13" fill="none" stroke="#eee"/></svg></span>
    <span class="si w30"><svg width="18" height="24" viewBox="0 0 18 24"><path d="M9 1L13 14L18 23L9 18L0 23L5 14Z" fill="#d8dade"/></svg></span>
    <span class="si w30 scale">1:1</span>
    <span class="si w11"><i class="car big"></i></span>
  </div>
  <div class="sg sw50">
    <span class="si w32"><svg width="20" height="20" viewBox="0 0 20 20"><circle cx="10" cy="10" r="6" fill="none" stroke="#dfe1e4" stroke-width="4.500"/><path d="M10 0V4M10 16V20M0 10H4M16 10H20M3 3L6 6M14 14L17 17M17 3L14 6M3 17L6 14" stroke="#dfe1e4" stroke-width="3"/></svg></span>
    <span class="si w18"><i class="car big"></i></span>
  </div>
  <div class="sg sw31"><span class="si w31"><svg width="20" height="20" viewBox="0 0 20 20"><path d="M10 0V20M0 10H20" stroke="#eceef0" stroke-width="2.500"/></svg></span></div>
  <div class="sg sw68">
    <span class="si w31"><svg width="20" height="24" viewBox="0 0 20 24"><rect x="1" y="1" width="8" height="8" fill="none" stroke="#c8ccd2"/><circle cx="15" cy="11" r="4" fill="none" stroke="#c8ccd2"/><path d="M6 15L10 23H2Z" fill="none" stroke="#c8ccd2"/></svg></span>
    <span class="si w37"><svg width="26" height="26" viewBox="0 0 26 26"><path d="M3 0H20V15H3Z" fill="#4f8fd4"/><path d="M11 0V15M3 7H20" stroke="#cfe2f4" stroke-width="1.500"/><path d="M1 14H12V24H1Z" fill="#f0b840"/><path d="M12 19L17 24L26 13" fill="none" stroke="#48b858" stroke-width="3"/></svg></span>
  </div>
  <div class="sg sw30"><span class="si w30"><svg width="20" height="18" viewBox="0 0 20 18"><path d="M0 1H20V3.500H0ZM0 8H20V10.500H0ZM0 15H20V17.500H0Z" fill="#e8eaec"/></svg></span></div>
</footer>
<script src="mesh.js"></script>
</body>
</html>
```
FILE: styles.css
```css
* { box-sizing: border-box; }
html, body { margin: 0; padding: 0; }
body {
  width: 1919px; height: 1018px; overflow: hidden; position: relative;
  background: #222932; color: #e0e4ea;
  font-family: "Open Sans", "Noto Sans", sans-serif; font-size: 14px;
  display: flex; flex-direction: column;
}
svg { display: block; flex: none; }
i.car {
  display: inline-block; width: 0; height: 0; flex: none;
  border-left: 3px solid transparent; border-right: 3px solid transparent;
  border-top: 4px solid #c4c8ce;
}
i.car.big { border-left-width: 5px; border-right-width: 5px; border-top-width: 5px; }
i.car.small { margin-left: 8px; border-top-color: #dde; }
i.car.faint { border-top-color: #5f6875; }
i.car.dark { border-top-color: #3a3a3a; border-left-width: 4px; border-right-width: 4px; border-top-width: 5px; margin-top: 6px; }
i.car.pale { border-top-color: #c6c9d2; border-left-width: 5px; border-right-width: 5px; border-top-width: 5px; }
i.car.gr { border-top-color: #555; margin: 0 6px 0 3px; }
i.car.up { border-top: 0; border-bottom: 5px solid #666; margin-left: auto; margin-right: 5px; }
i.car.end { margin-left: auto; margin-right: 3px; }

.logo {
  position: absolute; left: 0; top: 0; width: 49px; height: 49px; z-index: 2;
  background: linear-gradient(#c8c8c8, #8c8c8c); border-right: 1px solid #2a2a2a; border-bottom: 2px solid #2a2a2a;
  display: flex; align-items: center; padding-left: 4px; gap: 1px;
}

.titlebar { height: 29px; background: #3c4555; display: flex; align-items: center; padding-left: 54px; flex: none; }
.qa { width: 30px; height: 29px; display: flex; align-items: center; justify-content: center; flex: none; }
.qs { width: 14px; height: 29px; display: flex; align-items: center; justify-content: center; flex: none; }
.qs.narrow { width: 10px; }
.workspace {
  width: 223px; height: 26px; margin-left: 3px; margin-bottom: 3px; flex: none; display: flex; align-items: center;
  background: #343c4b; border: 1px solid #2c3340; border-top: 0; padding-left: 3px; padding-right: 1px; color: #e4e6ea; font-size: 14.600px;
}
.wtext { margin-left: 3px; }
.workspace i.car { margin-left: auto; margin-right: 1px; }
.wmenu { width: 10px; height: 12px; margin-left: 5px; border-top: 2px solid #c4c8ce; flex: none; }
.wmenu::after { content: ""; display: block; margin-top: 1px; width: 0; height: 0; border-left: 5px solid transparent; border-right: 5px solid transparent; border-top: 5px solid #c4c8ce; }
.apptitle { margin-left: 160px; color: #8f98a6; display: flex; gap: 17px; white-space: nowrap; flex: none; font-size: 14.200px; }
.titleright { margin-left: auto; width: 720px; display: flex; align-items: center; height: 29px; flex: none; }
.play { width: 0; height: 0; margin-left: 4px; margin-right: 8px; border-top: 5px solid transparent; border-bottom: 5px solid transparent; border-left: 4px solid #d0d4da; flex: none; }
.search { width: 224px; height: 26px; margin-bottom: 3px; background: #3a4352; border: 1px solid #2c3340; border-top: 0; font-style: italic; color: #aeb5c0; font-size: 13.300px; padding: 3px 0 0 3px; flex: none; white-space: nowrap; }
.tb { width: 26px; height: 29px; display: flex; align-items: center; justify-content: center; flex: none; }
.binoc { margin-left: 2px; }
.usr { margin-left: 4px; }
.uname { width: 104px; margin-left: 4px; color: #e4e6ea; white-space: nowrap; flex: none; font-size: 14px; }
.cart { margin-left: 8px; }
.a360 { margin-left: 4px; }
.helpb { margin-left: 18px; }
.helpi { width: 20px; height: 20px; border-radius: 50%; background: #eef2f8; border: 2px solid #4a88d8; color: #2a62b0; font-weight: 700; font-size: 13px; display: flex; align-items: center; justify-content: center; }
.helpb + .qs { margin-left: 3px; }
.win { width: 30px; height: 29px; display: flex; align-items: center; justify-content: center; flex: none; }
.win.first { margin-left: 76px; }
.win.last { width: 28px; }

.ribbontabs { height: 25px; display: flex; align-items: flex-end; padding-left: 56px; background: #222932; flex: none; }
.rt { height: 25px; line-height: 25px; text-align: center; color: #b2b9c4; flex: none; white-space: nowrap; }
.rt.active { height: 22px; line-height: 20px; padding-top: 0; background: #3c4555; color: #f0f2f5; }
.w64 { width: 64px; } .w62 { width: 62px; } .w82 { width: 82px; } .w98 { width: 98px; } .w54 { width: 54px; } .w80 { width: 80px; } .w68 { width: 68px; } .w78 { width: 78px; } .w100 { width: 100px; } .w114 { width: 114px; } .w118 { width: 118px; }
.rtoggle { margin-left: 28px; height: 25px; display: flex; align-items: center; padding-bottom: 3px; }
.ribbontabs i.car.small { align-self: center; margin-bottom: 3px; }

.ribbon { height: 122px; display: flex; background: #222932; flex: none; }
.panel { background: #3a4353; border-right: 1px solid #232a34; display: flex; flex-direction: column; flex: none; height: 122px; }
.panel.noborder { border-right: 0; }
.p278 { width: 278px; } .p272 { width: 272px; } .p184 { width: 184px; } .p341 { width: 341px; } .p100 { width: 100px; } .p84 { width: 84px; } .p121 { width: 121px; } .p99 { width: 99px; } .p79 { width: 79px; } .p53 { width: 53px; }
.pbody { height: 100px; display: flex; flex: none; }
.pfoot { height: 22px; flex: none; display: flex; align-items: center; justify-content: center; gap: 6px; color: #dde1e7; margin-top: auto; }
.ftw { flex: 1; display: flex; align-items: center; justify-content: center; gap: 6px; }
.launch { width: 16px; flex: none; margin-left: -6px; }
.lg { display: flex; flex-direction: column; align-items: center; flex: none; padding-top: 6px; }
.w52 { width: 52px; } .w54 { width: 54px; } .w70 { width: 70px; } .w46 { width: 46px; } .w58 { width: 58px; } .w74 { width: 74px; } .w76 { width: 76px; } .w48 { width: 48px; } .w88 { width: 88px; } .w66 { width: 66px; }
.ic { height: 44px; display: flex; align-items: center; justify-content: center; }
.lb { line-height: 20px; height: 20px; margin-top: 2px; color: #e2e5ea; white-space: nowrap; text-align: center; }
.tw .lb + .lb { margin-top: 0; }
.lg i.car { margin-top: 3px; }
.st { display: flex; flex-direction: column; padding-top: 3.500px; height: 100px; flex: none; }
.rw { height: 31px; display: flex; align-items: center; flex: none; }
.cell { display: flex; align-items: center; justify-content: center; flex: none; height: 100%; }
.w32 { width: 32px; } .w14 { width: 14px; } .w28 { width: 28px; } .w36 { width: 36px; } .w34 { width: 34px; } .w12 { width: 12px; } .w30 { width: 30px; } .w26 { width: 26px; } .w20 { width: 20px; } .w24 { width: 24px; } .w22 { width: 22px; }
.gapl { margin-left: 6px; }
.gapr { margin-left: 9px; }
.mi { display: flex; align-items: center; flex: none; height: 100%; }
.w97 { width: 97px; padding-left: 6px; } .w87 { width: 87px; }
.ml { margin-left: 5px; color: #e2e5ea; }
.ml.s1 { margin-left: 6px; }
.ml.s0 { margin-left: 7px; }
.bigA { font-family: "Liberation Sans", sans-serif; font-size: 46px; line-height: 44px; color: #dcdcdc; font-weight: 400; }
.lcol { display: flex; flex-direction: column; padding-top: 6px; flex: none; }
.combo { display: flex; align-items: center; background: #4a5568; border: 1px solid #2a313c; flex: none; }
.combo.layer { width: 260px; height: 27px; margin-left: -1px; padding-left: 6px; gap: 5px; }
.swatch { width: 18px; height: 18px; background: #000; flex: none; margin-left: 3px; }
.ctext { color: #e4e6ea; margin-left: 0; }
.lrow { display: flex; height: 32px; align-items: center; margin-left: -3px; flex: none; }
.lrow:first-of-type { margin-top: 1px; }
.pcol { display: flex; flex-direction: column; padding-top: 6px; gap: 3.500px; flex: none; }
.prow { display: flex; align-items: center; height: 27px; flex: none; }
.pic { width: 26px; display: flex; justify-content: center; flex: none; }
.combo.prop { width: 169px; height: 27px; margin-left: 2px; padding-left: 3px; }
.swatch.sq { width: 20px; height: 19px; margin-left: 9px; border: 1px solid #8a8f98; }
.m1 { margin-left: 13px; }
.pline { width: 77px; height: 1px; background: #e8eaec; flex: none; }
.pline + .ctext { margin-left: 4px; }

.doctabs { height: 33px; display: flex; align-items: flex-end; padding-left: 25px; flex: none; }
.dt { height: 27px; display: flex; align-items: center; flex: none; border-radius: 12px 12px 0 0; }
.start { width: 155px; background: #2b333f; color: #a9b0bb; padding-left: 14px; }
.current { width: 163px; background: #3a4353; color: #e0e4ea; padding-left: 13px; justify-content: space-between; padding-right: 25px; }
.plus { width: 24px; margin-left: 2px; background: #2f3743; justify-content: center; height: 21px; margin-bottom: 2px; border-radius: 8px 8px 4px 4px; }
.strip { height: 5px; background: #3a4353; flex: none; }

.viewport { position: relative; flex: none; height: 747px; background: #222932; }
.vplabel { position: absolute; left: 3px; top: 6px; color: #e4e6ea; font-size: 14.500px; white-space: nowrap; }
.vpctrl { position: absolute; left: 1836px; top: 9px; display: flex; gap: 13px; align-items: center; }
.mesh { position: absolute; left: 640px; top: 76px; display: block; }
.ucs { position: absolute; left: 781px; top: 382px; }
.cube { position: absolute; left: 1737px; top: 71px; }
.ct { font-family: "Liberation Sans", sans-serif; font-weight: 700; fill: #3c3f44; }
.ct-top { font-size: 9px; }
.ct-front { font-size: 12px; }
.ct-dir { fill: #c8c8c8; }
.ct-w { font-size: 18px; font-style: italic; }
.ct-e { font-size: 17px; }
.ct-s { font-size: 21px; fill: #c8c8c8; }
.unnamed { position: absolute; left: 1780px; top: 207px; width: 81px; height: 20px; border-radius: 5px; background: #8a8f9f; border: 1px solid #6e7282; display: flex; align-items: center; padding: 0 5px; justify-content: space-between; color: #3c4048; font-size: 12px; letter-spacing: .6px; }
.navbar { position: absolute; left: 1865px; top: 258px; width: 40px; height: 259px; background: #5c6068; border-radius: 3px; }
.scrollbar { position: absolute; left: 1909px; top: 0; width: 8px; height: 747px; background: #dbe6f2; }
.cmd { position: absolute; left: 50px; bottom: 1px; width: 1820px; height: 69px; display: flex; }
.cmdhandle { width: 31px; height: 69px; background: #2d3541; display: flex; flex-direction: column; align-items: center; justify-content: flex-start; gap: 9px; padding-top: 6px; flex: none; }
.cmdhandle svg:last-child { margin-top: -1px; }
.cmdmain { flex: 1; display: flex; flex-direction: column; }
.cmdhist { height: 44px; background: linear-gradient(#a2a2a2, #909090); border-bottom: 1px solid #222; font-family: "DejaVu Sans Mono", monospace; font-size: 14.600px; line-height: 19px; padding: 3px 0 0 3px; color: #101010; flex: none; }
.cmdinput { height: 25px; background: #bcbcbc; display: flex; align-items: center; padding-left: 5px; flex: none; }
.cmdph { font-family: "DejaVu Sans Mono", monospace; font-style: italic; font-size: 13.900px; color: #666; margin-left: 2px; }

.layouttabs { height: 27px; display: flex; align-items: flex-start; padding-left: 15px; flex: none; border-top: 1px solid #3c4452; }
.lt { height: 23px; display: flex; align-items: center; justify-content: center; flex: none; background: #2d3541; border-radius: 0 0 10px 10px; margin-right: 2px; color: #d0d4da; }
.model { width: 73px; background: #3a4353; color: #fff; font-weight: 700; }
.w75 { width: 75px; }
.w80t { width: 80px; }
.ltplus { width: 26px; margin-left: 5px; }

.status { height: 30px; display: flex; padding-left: 1215px; gap: 2px; flex: none; }
.sg { height: 30px; background: #3a4353; display: flex; align-items: center; flex: none; }
.sw58 { width: 58px; } .sw79 { width: 79px; } .sw31 { width: 31px; } .sw129 { width: 129px; } .sw78 { width: 78px; } .sw130 { width: 130px; } .sw50 { width: 50px; } .sw68 { width: 68px; } .sw30 { width: 30px; }
.mtext { padding-left: 4px; color: #e8eaee; font-size: 14.500px; letter-spacing: -.4px; }
.si { height: 30px; display: flex; align-items: center; justify-content: center; flex: none; color: #e8eaee; }
.si.on { background: #5b8fc7; height: 28px; }
.w31 { width: 31px; } .w17 { width: 17px; } .w21 { width: 21px; } .w11 { width: 11px; } .w18 { width: 18px; } .w37 { width: 37px; }
.scale { font-size: 13px; letter-spacing: -.5px; }
```
FILE: mesh.js
```js
(function () {
  var cv = document.getElementById('mesh'), ctx = cv.getContext('2d');
  var OX = 640, OY = 290, W = cv.width, H = cv.height, CX = 806.5;
  var img = ctx.createImageData(W, H), d = img.data;
  function lerp(t, v) {
    if (v <= t[0][0]) return t[0][1];
    for (var i = 1; i < t.length; i++) if (v <= t[i][0]) {
      var a = t[i - 1], b = t[i];
      return a[1] + (b[1] - a[1]) * (v - a[0]) / (b[0] - a[0]);
    }
    return t[t.length - 1][1];
  }
  var upper = [[392,143.5],[400,142],[410,139],[425,131.5],[440,120],[455,104],[467,87],[480,73],[493,63],[510,54],[530,50.5]];
  var lower = [[530,50.5],[540,51],[560,60],[580,77],[600,104],[620,125],[640,139],[655,144],[665,145]];
  function half(y) {
    if (y < 308 || y > 748) return -1;
    if (y < 392) return 143.5 * Math.sqrt(1 - Math.pow((392 - y) / 84, 2));
    if (y <= 530) return lerp(upper, y);
    if (y <= 665) return lerp(lower, y);
    return 145 * Math.sqrt(Math.max(0, 1 - Math.pow((y - 665) / 83, 2)));
  }
  var tb = [[660,392],[680,415],[700,438],[720,452],[750,470],[787,481],[797,473],[820,452],[860,431],[903,420],[943,403],[955,392]];
  var bb = [[660,665],[673,643],[687,632],[720,610],[760,583],[790,583],[800,597],[837,615],[850,627],[860,627],[890,633],[933,650],[955,665]];

  /* A line index that runs 1 per 3 px on the right and tightens to 1 per 2.15 px on the left */
  function phase(u) {
    if (u > 770) return (u - 770) / 3;
    if (u > 720) return (u - 770) / 2.6;
    return -50 / 2.6 + (u - 720) / 2.15;
  }
  /* Monotonic warp: lines lean into each cusp as q grows, with no gaps between */
  function warp(x, q, c1, a1, w1, c2, a2, w2) {
    return x + q * (a1 * Math.tanh((x - c1) / w1) + a2 * Math.tanh((x - c2) / w2));
  }
  function isLine(x, y, q, c1, a1, w1, c2, a2, w2) {
    return Math.floor(phase(warp(x, q, c1, a1, w1, c2, a2, w2))) !==
           Math.floor(phase(warp(x + 1, q, c1, a1, w1, c2, a2, w2)));
  }
  for (var y = 0; y < H; y++) {
    var py = y + OY;
    var hw = half(py);
    if (hw < 0) continue;
    for (var x = 0; x < W; x++) {
      var px = x + OX;
      if (Math.abs(px + 0.5 - CX) > hw) continue;
      var v = 255, q, dist, step, idx;
      if (py < 500) {
        dist = lerp(tb, px) - py;
        if (dist >= 0) {
          q = Math.min(1, (py - 308) / 125); q = q * q;
          if (isLine(px, py, q, 857, 11, 14, 790, 8, 18)) {
            step = dist > 42 ? 1 : dist > 22 ? 2 : dist > 9 ? 3 : 4;
            if (px < 735 && step < 2) step = 2;
            idx = Math.floor(phase(warp(px, q, 857, 11, 14, 790, 8, 18)));
            if (step === 1 || ((py + idx) % step + step) % step === 0) v = 0;
          }
        }
      } else if (py > 575 && Math.abs(px + 0.5 - CX) < hw - 1.2) {
        dist = py - lerp(bb, px);
        if (dist >= 0) {
          q = 1 - Math.min(1, Math.max(0, (py - 590) / 150)); q = q * q;
          if (isLine(px, py, q, 854, 11, 14, 772, 8, 18)) {
            step = dist > 50 ? 1 : dist > 26 ? 2 : dist > 11 ? 3 : 4;
            if (px < 735 && py < 715 && step < 2) step = 2;
            idx = Math.floor(phase(warp(px, q, 854, 11, 14, 772, 8, 18)));
            if (step === 1 || ((py + idx) % step + step) % step === 0) v = 0;
          }
        }
      }
      var i = (y * W + x) * 4;
      if (v) { d[i] = d[i + 1] = d[i + 2] = 255; }
      else { d[i] = 34; d[i + 1] = 41; d[i + 2] = 50; }
      d[i + 3] = 255;
    }
  }
  ctx.putImageData(img, 0, 0);
  /* white seams across the lower bowl */
  ctx.strokeStyle = '#fff'; ctx.lineWidth = 1; ctx.lineCap = 'round';
  [
    [[700, 715], [745, 703], [785, 698], [820, 688], [860, 683], [900, 676], [945, 672]],
    [[664, 673], [685, 666], [720, 650], [750, 640]],
    [[760, 670], [790, 693], [815, 694]],
    [[716, 640], [725, 655], [760, 668]]
  ].forEach(function (l) {
    ctx.beginPath();
    l.forEach(function (p, i) {
      if (i) ctx.lineTo(p[0] - OX, p[1] - OY); else ctx.moveTo(p[0] - OX, p[1] - OY);
    });
    ctx.stroke();
  });
}());
```
